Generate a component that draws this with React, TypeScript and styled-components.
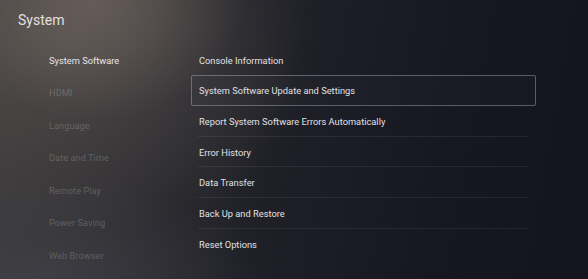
import React from 'react';
import styled, { createGlobalStyle } from 'styled-components';

const GlobalStyle = createGlobalStyle`
  html, body {
    margin: 0;
    padding: 0;
    background: #16171f;
  }
  * {
    box-sizing: border-box;
  }
`;

const Screen = styled.div`
  width: 588px;
  height: 279px;
  overflow: hidden;
  font-family: Roboto, 'Noto Sans', sans-serif;
  background:
    radial-gradient(ellipse 150px 120px at 95px 0px, rgba(125, 112, 105, 0.55), rgba(125, 112, 105, 0) 100%),
    radial-gradient(ellipse 260px 200px at 60px 40px, rgba(95, 88, 84, 0.6), rgba(95, 88, 84, 0) 100%),
    radial-gradient(ellipse 220px 120px at 40px 290px, rgba(70, 72, 80, 0.6), rgba(70, 72, 80, 0) 100%),
    linear-gradient(100deg, #3c3a3b 0%, #2e2d31 25%, #1d1e26 50%, #161721 75%, #13141e 100%);
  display: flex;
  flex-direction: column;
`;

const Header = styled.header`
  height: 44px;
  padding: 10px 0 0 18px;
`;

const Title = styled.h1`
  margin: 0;
  font-size: 14px;
  font-weight: 400;
  line-height: 20px;
  color: #e2e0df;
`;

const Body = styled.div`
  display: flex;
  flex-direction: row;
`;

const Sidebar = styled.nav`
  width: 191px;
  padding-left: 49px;
  display: flex;
  flex-direction: column;
`;

const SideItem = styled.div<{ $active?: boolean }>`
  height: 32.5px;
  display: flex;
  align-items: center;
  font-size: 9.3px;
  color: ${(p) => (p.$active ? '#e6e6e8' : 'rgba(255, 255, 255, 0.2)')};
`;

const List = styled.div`
  width: 345px;
  display: flex;
  flex-direction: column;
  margin-top: 0.7px;
`;

const Row = styled.div<{ $selected?: boolean; $line?: boolean }>`
  position: relative;
  height: 30.7px;
  display: flex;
  align-items: center;
  padding-left: 7px;
  font-size: 9.3px;
  color: #e0e0e3;
  border: 1px solid ${(p) => (p.$selected ? 'rgba(170, 175, 190, 0.45)' : 'transparent')};
  border-radius: 2px;
  background: ${(p) => (p.$selected ? 'rgba(255, 255, 255, 0.015)' : 'transparent')};
  &::after {
    content: '';
    display: ${(p) => (p.$line ? 'block' : 'none')};
    position: absolute;
    left: 6px;
    right: 6px;
    bottom: -1px;
    height: 1px;
    background: rgba(255, 255, 255, 0.07);
  }
`;

const sideItems = [
  'System Software',
  'HDMI',
  'Language',
  'Date and Time',
  'Remote Play',
  'Power Saving',
  'Web Browser',
];

const rows = [
  { label: 'Console Information' },
  { label: 'System Software Update and Settings', selected: true },
  { label: 'Report System Software Errors Automatically', line: true },
  { label: 'Error History', line: true },
  { label: 'Data Transfer', line: true },
  { label: 'Back Up and Restore', line: true },
  { label: 'Reset Options' },
];

export default function App() {
  return (
    <>
      <GlobalStyle />
      <Screen>
        <Header>
          <Title>System</Title>
        </Header>
        <Body>
          <Sidebar>
            {sideItems.map((s, i) => (
              <SideItem key={s} $active={i === 0}>
                {s}
              </SideItem>
            ))}
          </Sidebar>
          <List>
            {rows.map((r) => (
              <Row key={r.label} $selected={r.selected} $line={r.line}>
                {r.label}
              </Row>
            ))}
          </List>
        </Body>
      </Screen>
    </>
  );
}
